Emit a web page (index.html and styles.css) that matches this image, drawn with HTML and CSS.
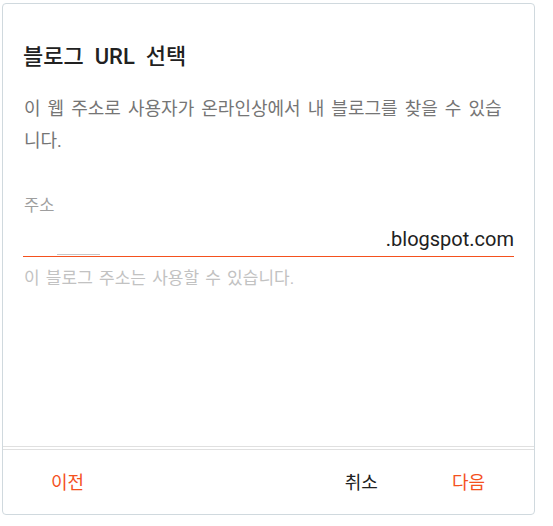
FILE: index.html
```html
<!DOCTYPE html>
<html lang="ko">
<head>
  <meta charset="UTF-8">
  <meta name="viewport" content="width=device-width, initial-scale=1.0">
  <title>블로그 URL 선택</title>
  <link rel="stylesheet" href="styles.css">
</head>
<body>

  <div class="dialog">
    <div class="dialog-body">
      <h1 class="title">블로그 URL 선택</h1>
      <p class="desc">이 웹 주소로 사용자가 온라인상에서 내 블로그를 찾을 수 있습니다.</p>

      <label class="field-label" for="address">주소</label>
      <div class="field">
        <input type="text" id="address" class="field-input" autocomplete="off">
        <span class="suffix">.blogspot.com</span>
      </div>
      <div class="hint">이 블로그 주소는 사용할 수 있습니다.</div>
    </div>

    <div class="dialog-footer">
      <button class="btn btn-accent">이전</button>
      <div class="spacer"></div>
      <button class="btn">취소</button>
      <button class="btn btn-accent">다음</button>
    </div>
  </div>

</body>
</html>
```

FILE: styles.css
```css
body {
  margin: 0;
  padding: 3px 0 0 2px;
  font-family: Roboto, 'Noto Sans CJK KR', sans-serif;
  background: #fff;
}
.dialog {
  box-sizing: border-box;
  width: 533px;
  height: 512px;
  border: 1px solid #d0d9de;
  border-radius: 4px;
  display: flex;
  flex-direction: column;
}
.dialog-body {
  flex: 1;
  padding: 39px 20px 0 20px;
  border-bottom: 1px solid #e0e0e0;
}
.title {
  margin: 0;
  font-size: 22px;
  font-weight: 500;
  line-height: 28px;
  color: #212121;
  word-spacing: 5.5px;
}
.desc {
  margin: 22px 0 0 1px;
  font-size: 18px;
  line-height: 32px;
  color: #757575;
  word-spacing: 2.6px;
}
.field-label {
  display: block;
  margin: 39px 0 0 1px;
  font-size: 16.5px;
  line-height: 20px;
  color: #9e9e9e;
}
.field {
  display: flex;
  align-items: flex-end;
  height: 40px;
  border-bottom: 1px solid #f4511e;
}
.field-input {
  width: 43px;
  margin: 0 0 1px 34px;
  padding: 0;
  border: none;
  border-bottom: 1px solid #c8c8c8;
  height: 20px;
  outline: none;
  font-size: 20px;
}
.suffix {
  margin-left: auto;
  font-size: 20px;
  line-height: 30px;
  padding-bottom: 2px;
  color: #212121;
}
.hint {
  margin: 11px 0 0 1px;
  font-size: 17px;
  line-height: 20px;
  color: #c2c2c2;
  word-spacing: 2px;
}
.dialog-footer {
  height: 61px;
  margin-top: 2px;
  border-top: 1px solid #e0e0e0;
  display: flex;
  align-items: center;
  gap: 26px;
  padding: 0 25px 3px 24px;
}
.spacer {
  flex: 1;
}
.btn {
  background: none;
  border: none;
  padding: 8px 24px;
  font-family: Roboto, 'Noto Sans CJK KR', sans-serif;
  font-size: 18px;
  color: #212121;
  cursor: pointer;
}
.btn-accent {
  color: #f4511e;
}
```
